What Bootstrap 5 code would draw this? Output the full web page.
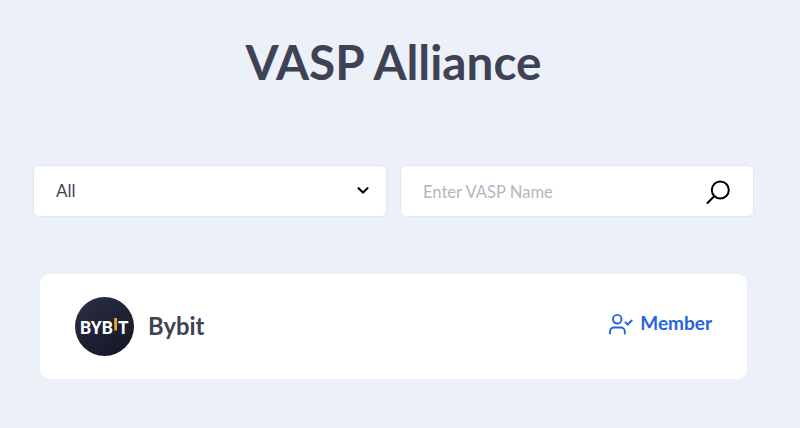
<!DOCTYPE html>
<html lang="en">
<head>
<meta charset="utf-8">
<meta name="viewport" content="width=device-width, initial-scale=1">
<title>VASP Alliance</title>
<link href="https://cdn.jsdelivr.net/npm/bootstrap@5.3.0/dist/css/bootstrap.min.css" rel="stylesheet">
<style>
body{background:#ecf0f8;color:#3f4254;font-family:Lato,sans-serif;height:428px;overflow:hidden}
main{padding:34px 46px 0 33px}
.page-title{font-size:47.7px;line-height:56px;font-weight:700;color:#3f4254;margin:0 0 75px}
.filters{gap:13px;height:52px}
.filters .field{width:50%;height:52px;background:#fff;border:1px solid #e4e6ef;border-radius:6px;padding:0 22px;font-size:17px}
.field input{font-size:16.600px;color:#3f4254;outline:0;padding:2px 0 0;min-width:0}
.field input::placeholder{color:#b5b5c3;opacity:1}
.field.choice{padding-right:16px}
.member-card{margin:56.500px 7px 0;height:105.500px;border-radius:10px;padding:0 35px}
.vasp-name{font-size:23.800px;font-weight:700;margin-left:14px;padding-top:2px}
.status{color:#2563e0;font-size:19px;font-weight:700;gap:7px;margin-top:-6px}
.status svg{margin-top:2px}
</style>
</head>
<body>
<main>
  <h1 class="page-title text-center">VASP Alliance</h1>
  <form class="filters d-flex">
    <div class="field choice d-flex align-items-center justify-content-between">
      <span>All</span>
      <svg width="14" height="12" viewBox="0 0 14 12" fill="none" stroke="#000" stroke-width="2.2" stroke-linecap="round" stroke-linejoin="round"><path d="M2.500 3.200 7 7.500l4.500-4.300"/></svg>
    </div>
    <div class="field d-flex align-items-center">
      <input class="border-0 bg-transparent flex-grow-1" type="text" placeholder="Enter VASP Name">
      <svg width="26" height="26" viewBox="0 0 26 26" fill="none" stroke="#000" stroke-width="2" stroke-linecap="round"><circle cx="15.300" cy="12" r="8.500"/><path d="M9.200 18.200 2.500 25"/></svg>
    </div>
  </form>
  <section class="member-card bg-white d-flex align-items-center justify-content-between">
    <div class="d-flex align-items-center">
      <svg width="59" height="59" viewBox="0 0 59 59">
        <defs><linearGradient id="navy" x1="0" y1="0" x2=".6" y2="1"><stop offset="0" stop-color="#2b3042"/><stop offset="1" stop-color="#15192a"/></linearGradient></defs>
        <circle cx="29.500" cy="29.500" r="29.500" fill="url(#navy)"/>
        <g fill="#fff" font-family="Roboto, sans-serif" font-weight="700" font-size="17.500">
          <text x="5" y="37.300" textLength="33" lengthAdjust="spacingAndGlyphs">BYB</text>
          <text x="43" y="37.300" textLength="10.500" lengthAdjust="spacingAndGlyphs">T</text>
        </g>
        <path d="M39.200 21H42v12.500h-2.800z" fill="#f0a62c"/>
      </svg>
      <span class="vasp-name">Bybit</span>
    </div>
    <div class="status d-flex align-items-center">
      <svg width="25" height="22" viewBox="0 0 25 22" fill="none" stroke="#2563e0" stroke-width="1.900" stroke-linecap="round" stroke-linejoin="round"><circle cx="9.200" cy="6.200" r="4.300"/><path d="M2 20.500v-2a4 4 0 0 1 4-4h6.800a4 4 0 0 1 4 4v2M17.500 9.300l2.200 2.400 4-4.200"/></svg>
      <span>Member</span>
    </div>
  </section>
</main>
<script src="https://cdn.jsdelivr.net/npm/bootstrap@5.3.0/dist/js/bootstrap.bundle.min.js"></script>
</body>
</html>
